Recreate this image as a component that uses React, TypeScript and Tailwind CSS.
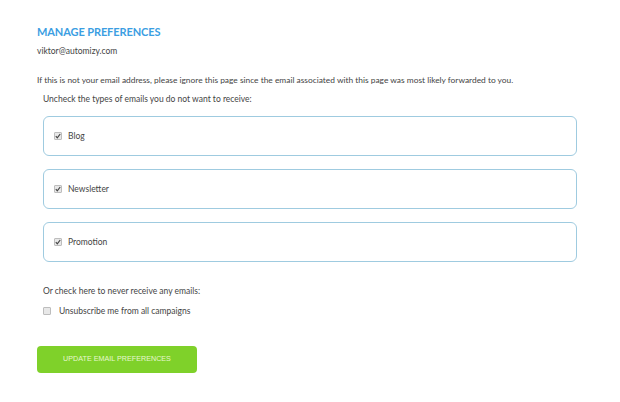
import React from "react";

function Check({ checked }: { checked: boolean }) {
  return (
    <span className="inline-flex h-[8px] w-[8px] items-center justify-center rounded-[1px] border border-[#bdbdbd] bg-[#e8e8e8]">
      {checked && (
        <svg width="6" height="6" viewBox="0 0 6 6">
          <path d="M0.8 3.2 L2.3 4.8 L5.2 1" stroke="#444" strokeWidth="1.2" fill="none" />
        </svg>
      )}
    </span>
  );
}

export default function App() {
  const items = ["Blog", "Newsletter", "Promotion"];
  return (
    <div className="h-[402px] w-[620px] bg-white text-[#444] [font-family:Lato,'Noto_Sans',sans-serif]">
      <div className="pl-[37px] pt-[25px]">
        <h1 className="text-[11px] font-bold leading-[13px] tracking-[-0.1px] text-[#3b9ee2]">MANAGE PREFERENCES</h1>
        <p className="mt-[7px] text-[8.5px] leading-[12px]">viktor@automizy.com</p>
        <p className="mt-[17px] text-[8.4px] leading-[12px]">
          If this is not your email address, please ignore this page since the email associated with this page was most likely forwarded to you.
        </p>
        <div className="pl-[6px] pr-[43px]">
          <p className="mt-[7px] text-[8.5px] leading-[12px]">Uncheck the types of emails you do not want to receive:</p>
          <div className="mt-[11px] flex flex-col gap-[13px]">
            {items.map((it) => (
              <div key={it} className="flex h-[40px] items-center gap-[6px] rounded-[6px] border border-[#9fcbe0] pl-[10px] text-[8.5px]">
                <Check checked />
                <span>{it}</span>
              </div>
            ))}
          </div>
          <p className="mt-[23px] text-[8.5px] leading-[12px]">Or check here to never receive any emails:</p>
          <div className="mt-[8px] flex items-center gap-[8px] text-[8.5px] leading-[12px]">
            <Check checked={false} />
            <span>Unsubscribe me from all campaigns</span>
          </div>
        </div>
        <button className="mt-[29px] flex h-[27px] w-[160px] items-center justify-center rounded-[4px] bg-[#7fd12a] text-[7.2px] text-[#e6f7cf] [font-family:'Liberation_Sans',Arial,sans-serif]">
          UPDATE EMAIL PREFERENCES
        </button>
      </div>
    </div>
  );
}
